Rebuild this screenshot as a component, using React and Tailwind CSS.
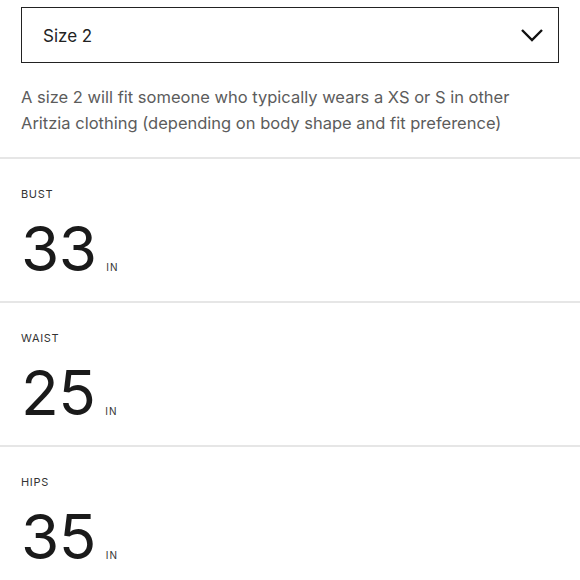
import React from 'react';

const measurements = [
  { label: 'BUST', value: '33' },
  { label: 'WAIST', value: '25' },
  { label: 'HIPS', value: '35' },
];

const App = () => {
  return (
    <div className="w-[580px] h-[580px] overflow-hidden bg-white text-[#222] font-['Inter','Liberation_Sans',sans-serif]">
      <div className="px-[21px] pt-[7px]">
        <div className="flex items-center justify-between h-[56px] border-[1.5px] border-[#222] pl-[21px] pr-[14px]">
          <span className="text-[17px] pt-[3px]">Size 2</span>
          <svg width="24" height="14" viewBox="0 0 24 14" fill="none">
            <path d="M2 2 L12 12 L22 2" stroke="#111" strokeWidth="2.4" />
          </svg>
        </div>
        <p className="mt-[21px] mb-[21px] text-[16.5px] leading-[26px] text-[#5c5c5c]">
          A size 2 will fit someone who typically wears a XS or S in other Aritzia clothing (depending on body shape and fit preference)
        </p>
      </div>
      {measurements.map((m) => (
        <div key={m.label} className="border-t-2 border-[#e6e6e6] px-[21px] pt-[28px] h-[144px]">
          <div className="text-[11px] leading-[14px] tracking-[0.06em] text-[#333]">{m.label}</div>
          <div className="flex items-baseline mt-[14px]">
            <span className="text-[62px] leading-[68px] tracking-[-0.01em] text-[#1a1a1a]">{m.value}</span>
            <span className="ml-[10px] text-[10px] tracking-[0.1em] text-[#333]">IN</span>
          </div>
        </div>
      ))}
    </div>
  );
};

export default App;
